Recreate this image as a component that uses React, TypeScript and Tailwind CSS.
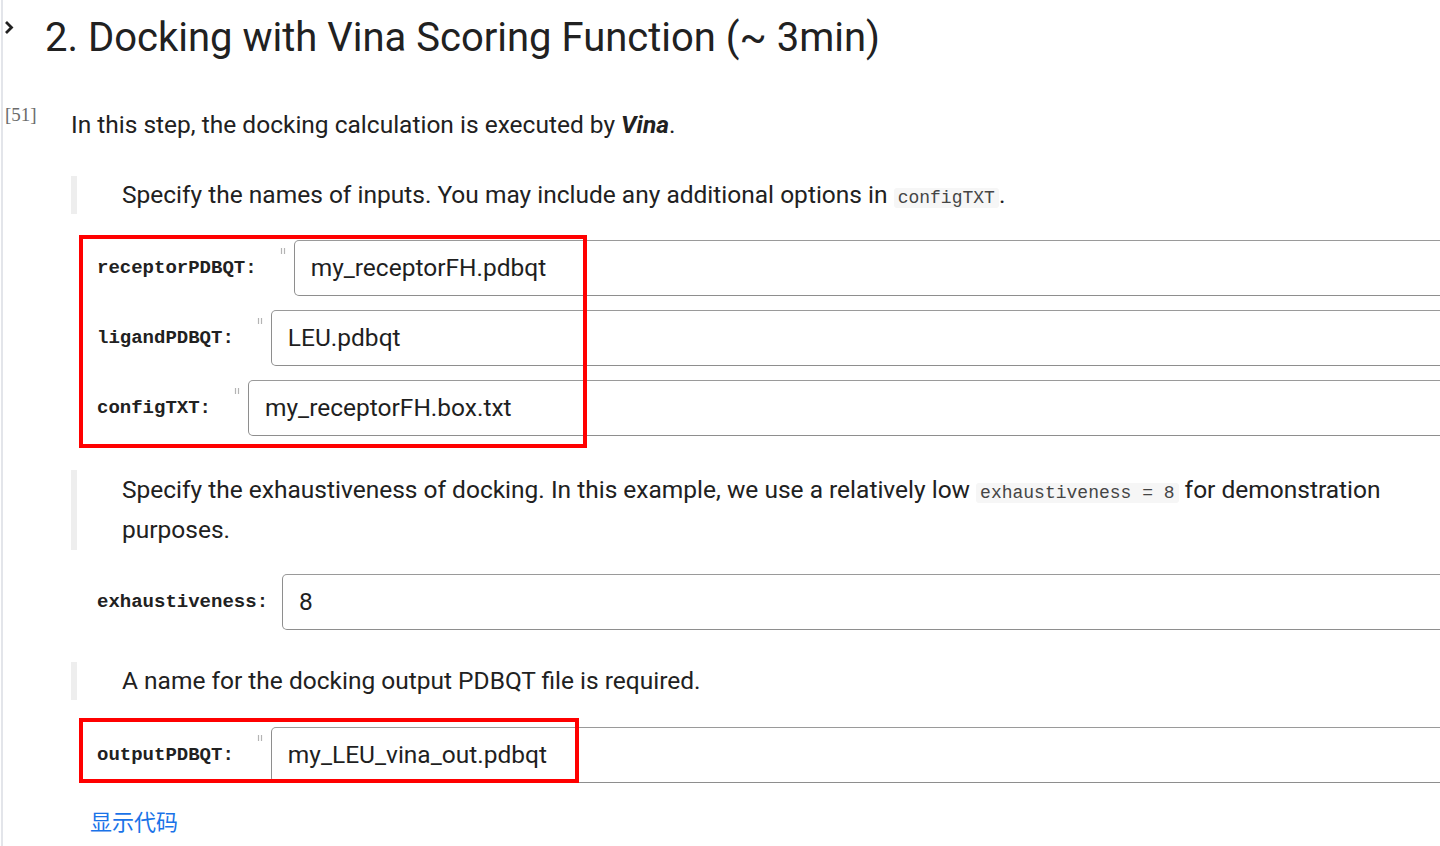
import React from "react";

const mono = "font-['Liberation_Mono','DejaVu_Sans_Mono',monospace]";

const Quote = ({ children, className = "" }: { children: React.ReactNode; className?: string }) => (
  <div className={"border-l-[6px] border-[#eeeeee] pl-[45px] text-[24.5px] text-[#212121] " + className}>
    {children}
  </div>
);

const Code = ({ children }: { children: React.ReactNode }) => (
  <code className={mono + " rounded-[3px] bg-[#f6f6f6] px-[4px] text-[18px] leading-none text-[#454545]"}>
    {children}
  </code>
);

const Mark = () => (
  <svg className="mb-[34px]" width="14" height="8" viewBox="0 0 14 8">
    <line x1="1.5" y1="1" x2="1.5" y2="7" stroke="#b4b4b4" strokeWidth="1.2" />
    <line x1="4.5" y1="1" x2="4.5" y2="7" stroke="#b4b4b4" strokeWidth="1.2" />
  </svg>
);

const Field = ({ label, value, mark = true }: { label: string; value: string; mark?: boolean }) => (
  <div className="flex items-center pl-[26px]">
    <span className={mono + " text-[19px] font-bold text-[#212121] " + (mark ? "mr-[23px]" : "mr-[14px]")}>
      {label}
    </span>
    {mark && <Mark />}
    <div className="-mr-6 flex h-[56px] flex-1 items-center rounded-[5px] border border-[#8e8e8e] border-t-[#9a9a9a] px-[16px] text-[24.5px] text-[#1f1f1f]">
      {value}
    </div>
  </div>
);

export default function App() {
  return (
    <div className="min-h-screen overflow-hidden bg-white font-['Roboto','Noto_Sans',sans-serif]">
      <div className="ml-[1px] min-h-[846px] border-l-2 border-[#e3e5ea]">
        <div className="flex h-[76px] items-center">
          <svg className="ml-[1px] -mt-[22px]" width="10" height="15" viewBox="0 0 10 15">
            <polyline points="2,2 7.5,7.5 2,13" fill="none" stroke="#212121" strokeWidth="2.8" />
          </svg>
          <h2 className="ml-[31px] text-[40px] font-normal text-[#212121]">
            2. Docking with Vina Scoring Function (~ 3min)
          </h2>
        </div>

        <div className="flex pt-[29px]">
          <div className="w-[68px] pl-[2px] font-['Liberation_Serif',serif] text-[19px] leading-[20px] text-[#6b6b6b]">
            [51]
          </div>
          <div className="flex-1">
            <p className="text-[24.5px] leading-[40px] text-[#212121]">
              In this step, the docking calculation is executed by <b className="italic">Vina</b>.
            </p>

            <Quote className="mt-[31px] leading-[38px]">
              Specify the names of inputs. You may include any additional options in <Code>configTXT</Code>.
            </Quote>

            <div className="relative mt-[26px] flex flex-col gap-[14px]">
              <Field label="receptorPDBQT:" value="my_receptorFH.pdbqt" />
              <Field label="ligandPDBQT:" value="LEU.pdbqt" />
              <Field label="configTXT:" value="my_receptorFH.box.txt" />
              <div className="pointer-events-none absolute -top-[5px] left-[8px] h-[213px] w-[508px] border-4 border-[#ff0000]" />
            </div>

            <Quote className="mt-[34px] leading-[40px]">
              Specify the exhaustiveness of docking. In this example, we use a relatively low{" "}
              <Code>exhaustiveness = 8</Code> for demonstration purposes.
            </Quote>

            <div className="mt-[24px]">
              <Field label="exhaustiveness:" value="8" mark={false} />
            </div>

            <Quote className="mt-[32px] leading-[38px]">
              A name for the docking output PDBQT file is required.
            </Quote>

            <div className="relative mt-[27px]">
              <Field label="outputPDBQT:" value="my_LEU_vina_out.pdbqt" />
              <div className="pointer-events-none absolute -top-[9px] left-[8px] h-[65px] w-[500px] border-4 border-[#ff0000]" />
            </div>

            <div className="mt-[25px] pl-[19px] font-['Noto_Sans_CJK_SC',sans-serif] text-[22px] leading-[24px] text-[#1a73e8]">
              显示代码
            </div>
          </div>
        </div>
      </div>
    </div>
  );
}
